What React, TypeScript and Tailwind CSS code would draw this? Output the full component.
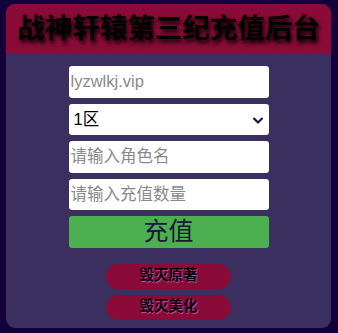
import { useState } from "react";

const font = { fontFamily: '"Liberation Sans", "Noto Sans CJK SC", sans-serif' };

export default function App() {
  const [area, setArea] = useState("1");

  return (
    <div className="min-h-[333px] bg-[#13003a] pt-[4px] pl-[6px]" style={font}>
      <div className="w-[325px] h-[324px] rounded-[9px] bg-[#3a2f5f] overflow-hidden">
        {/* header */}
        <div className="h-[49px] bg-[#8a0b37] flex items-center justify-center">
          <h1 className="text-[27.5px] font-bold text-black leading-none whitespace-nowrap [text-shadow:2px_3px_4px_#000]">
            战神轩辕第三纪充值后台
          </h1>
        </div>

        {/* form */}
        <div className="flex flex-col items-center pt-[13px] gap-[6px]">
          <input
            className="w-[200px] h-[31.5px] rounded-[3px] bg-white px-[2px] text-[16.5px] text-black outline-none placeholder:text-[#8a8a8a]"
            placeholder="lyzwlkj.vip"
          />
          <div className="relative w-[200px] h-[31.5px]">
            <select
              value={area}
              onChange={(e) => setArea(e.target.value)}
              className="w-full h-full appearance-none rounded-[3px] bg-white pl-[5px] text-[16.5px] text-black outline-none"
            >
              <option value="1">1区</option>
              <option value="2">2区</option>
            </select>
            <svg className="absolute right-[5px] top-[12px] pointer-events-none" width="12" height="9" viewBox="0 0 12 9">
              <path d="M1.5 2 L6 6.5 L10.5 2" fill="none" stroke="#1a1540" strokeWidth="2.2" />
            </svg>
          </div>
          <input
            className="w-[200px] h-[31.5px] rounded-[3px] bg-white px-[2px] text-[16.5px] text-black outline-none placeholder:text-[#8a8a8a]"
            placeholder="请输入角色名"
          />
          <input
            className="w-[200px] h-[31.5px] rounded-[3px] bg-white px-[2px] text-[16.5px] text-black outline-none placeholder:text-[#8a8a8a]"
            placeholder="请输入充值数量"
          />
          <button className="w-[200px] h-[31.5px] rounded-[3px] bg-[#4caf50] text-[25px] leading-none text-[#1b1838]">
            充值
          </button>

          <div className="flex flex-col gap-[6px] mt-[10px]">
            <button className="w-[125px] h-[25px] rounded-[13px] bg-[#8a0b37] text-[14.5px] font-bold text-black [text-shadow:1px_1px_1px_#d04aa8]">
              毁灭原著
            </button>
            <button className="w-[125px] h-[25px] rounded-[13px] bg-[#8a0b37] text-[14.5px] font-bold text-black [text-shadow:1px_1px_1px_#d04aa8]">
              毁灭美化
            </button>
          </div>
        </div>
      </div>
    </div>
  );
}
